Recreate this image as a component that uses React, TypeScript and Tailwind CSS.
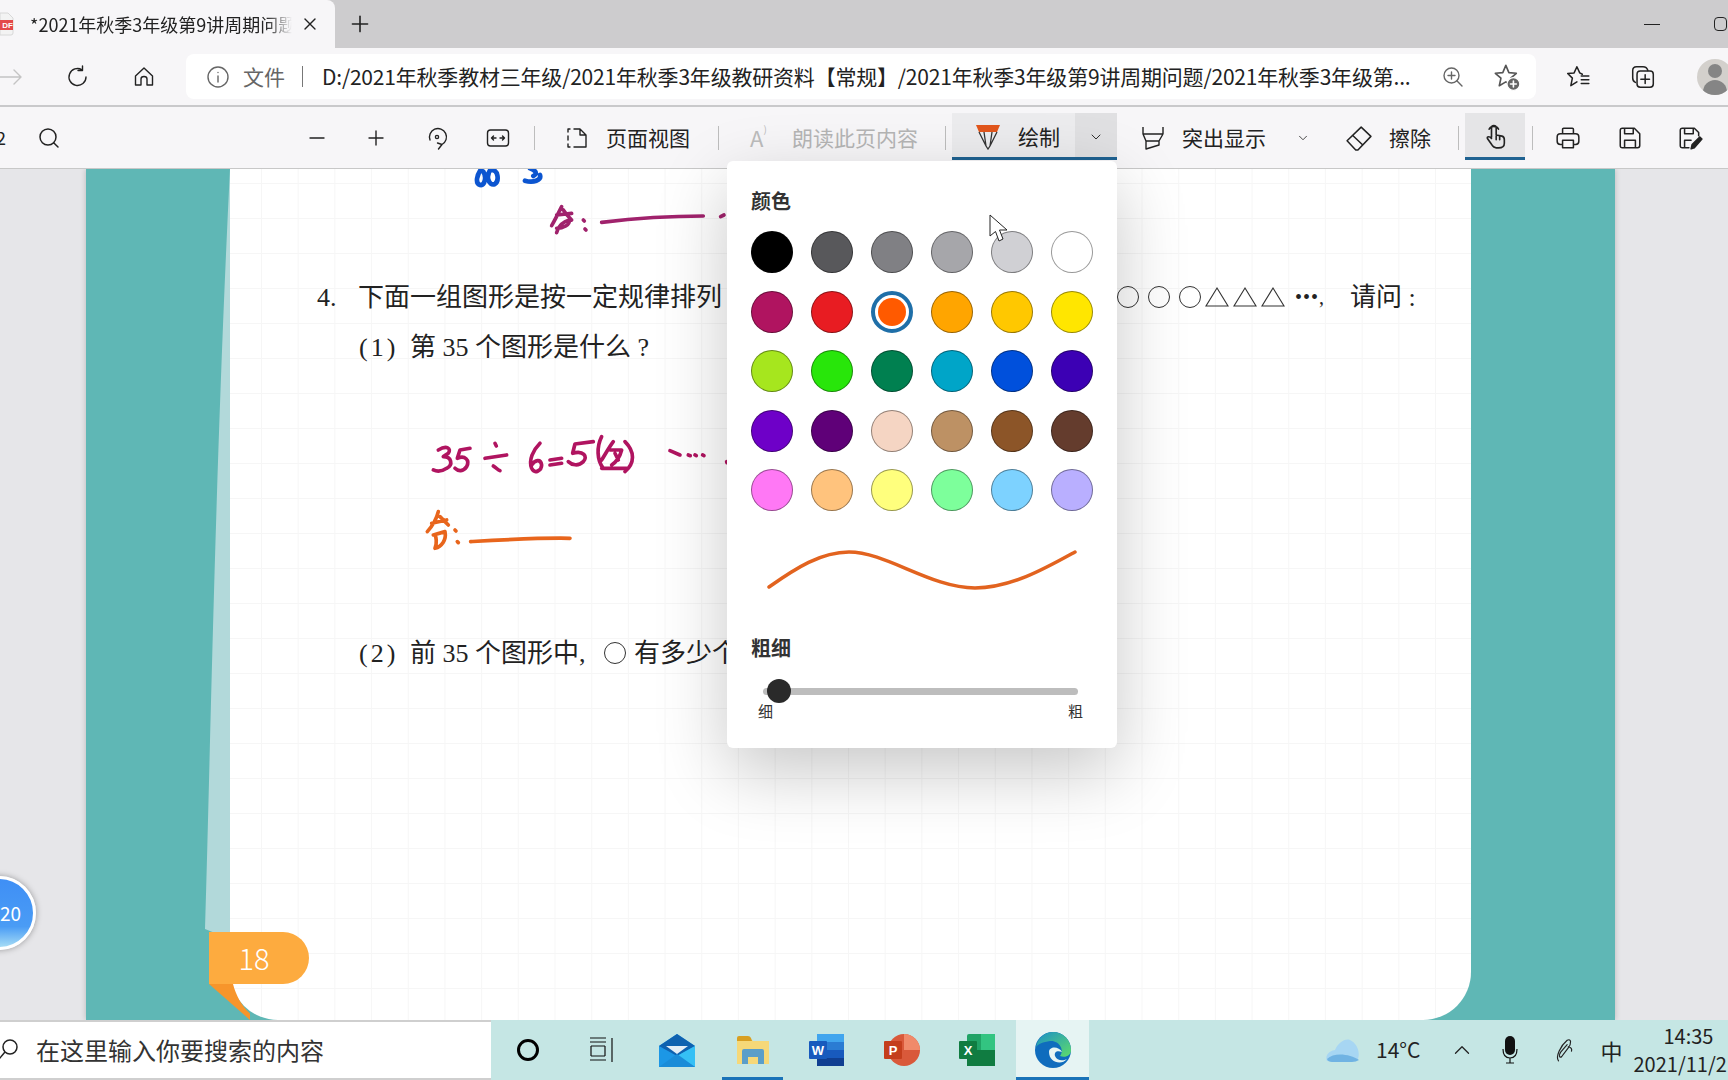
import { Minus, Plus, Search, X, ChevronDown, ChevronUp } from "lucide-react";

const SWATCHES = [
  "#000000", "#58585b", "#808084", "#a6a6aa", "#d0d0d4", "#ffffff",
  "#b01460", "#e81c22", "#ff5a00", "#ffa500", "#ffc800", "#ffe600",
  "#a6e61e", "#28e60a", "#008050", "#00a5c8", "#0050dc", "#3c00b4",
  "#6e00c8", "#5f0078", "#f5d5c3", "#bd9164", "#8c5528", "#643c2d",
  "#ff78f5", "#ffc37d", "#ffff7d", "#7dff9b", "#7dd2ff", "#b9afff",
];

function Icon({ children, size = 24, className = "" }: { children: React.ReactNode; size?: number; className?: string }) {
  return (
    <svg width={size} height={size} viewBox="0 0 24 24" fill="none" stroke="#222" strokeWidth="1.4" strokeLinecap="round" strokeLinejoin="round" className={`shrink-0 ${className}`}>
      {children}
    </svg>
  );
}

function Divider({ className = "" }: { className?: string }) {
  return <div className={`h-6 w-px shrink-0 bg-[#bdbdbd] ${className}`} />;
}

function Ring() {
  return <span className="inline-block h-[22px] w-[22px] shrink-0 rounded-full border border-[#333]" />;
}

function Triangle() {
  return (
    <svg width="24" height="22" viewBox="0 0 24 22" fill="none" stroke="#333" strokeWidth="1.1" className="shrink-0">
      <path d="M12 2 L23 20 H1 Z" />
    </svg>
  );
}

function TabStrip() {
  return (
    <div className="flex h-12 shrink-0 items-center bg-[#cdccce]">
      <div className="flex h-12 w-[335px] shrink-0 items-center rounded-tr-lg bg-[#f7f6f8]">
        <svg width="14" height="24" viewBox="0 0 14 24" className="shrink-0">
          <path d="M0 1 H8 L13 6 V21 Q13 23 11 23 H0 Z" fill="#f3f3f3" stroke="#d8d8d8" />
          <rect x="0" y="8" width="13" height="10" fill="#e34a4a" />
          <text x="13" y="16" textAnchor="end" fontSize="8" fontWeight="700" fill="#fff" fontFamily="Liberation Sans">DF</text>
        </svg>
        <div className="ml-[16px] w-[262px] overflow-hidden whitespace-nowrap text-[18px] text-[#222] [mask-image:linear-gradient(to_right,black_90%,transparent)]">
          *2021年秋季3年级第9讲周期问题
        </div>
        <X size={20} strokeWidth={1.6} color="#222" className="ml-[8px] shrink-0" />
      </div>
      <Plus size={26} strokeWidth={1.5} color="#222" className="ml-[12px] shrink-0" />
      <div className="ml-[1271px] h-px w-[16px] shrink-0 bg-[#222]" />
      <div className="ml-[54px] h-[14px] w-[13px] shrink-0 rounded-sm border border-[#222]" />
    </div>
  );
}

function AddressBar() {
  return (
    <div className="flex h-[59px] shrink-0 items-center border-b-2 border-[#c9c9cb] bg-[#f7f6f8]">
      <Icon><path d="M-4 12 H21 M14 5 L21 12 L14 19" stroke="#c4c4c4" /></Icon>
      <Icon className="ml-[42px]"><path d="M20 12 A8.5 8.5 0 1 1 16 4.8 M16.5 1 V5.5 H12" /></Icon>
      <Icon className="ml-[42px]"><path d="M3.5 11 L12 3 L20.5 11 V20 H15 V14 Q15 11.5 12 11.5 Q9 11.5 9 14 V20 H3.5 Z" /></Icon>
      <div className="ml-[30px] flex h-[45px] w-[1350px] shrink-0 items-center rounded-lg bg-white">
        <Icon size={24} className="ml-[20px]"><circle cx="12" cy="12" r="10" stroke="#666" /><path d="M12 11 V17 M12 7.4 V7.6" stroke="#666" /></Icon>
        <span className="ml-[13px] text-[21px] text-[#666]">文件</span>
        <div className="ml-[17px] h-[21px] w-px bg-[#777]" />
        <div className="ml-[19px] w-[1090px] overflow-hidden whitespace-nowrap text-[21px] tracking-[-0.2px] text-[#222]">
          D:/2021年秋季教材三年级/2021年秋季3年级教研资料【常规】/2021年秋季3年级第9讲周期问题/2021年秋季3年级第...
        </div>
        <Icon className="ml-[29px]"><circle cx="10.5" cy="10.5" r="7.5" stroke="#666" /><path d="M15.8 15.8 L21 21 M10.5 7 V14 M7 10.5 H14" stroke="#666" /></Icon>
        <Icon size={28} className="ml-[28px]">
          <path d="M11 2 L13.6 8.2 L20 8.8 L15.2 13 L16.6 19.5 L11 16.2 L5.4 19.5 L6.8 13 L2 8.8 L8.4 8.2 Z" stroke="#555" />
          <circle cx="17.5" cy="18" r="5.5" fill="#666" stroke="#fff" strokeWidth="1" />
          <path d="M17.5 15.5 V20.5 M15 18 H20" stroke="#fff" />
        </Icon>
      </div>
      <Icon size={26} className="ml-[29px]"><path d="M16 9.5 L13.6 8.2 L11 2.5 L8.4 8.2 L2.5 8.8 L6.8 13 L5.4 20 L11 16.5 M15 11 H22 M15 14.5 H22 M15 18 H22" /></Icon>
      <Icon size={26} className="ml-[39px]"><path d="M5 17 Q2.5 16 2.5 13 V6 Q2.5 2.5 6 2.5 H12 Q15.5 2.5 16.5 6" /><rect x="6.5" y="6.5" width="15" height="15" rx="3" /><path d="M14 10 V18 M10 14 H18" /></Icon>
      <div className="relative ml-[41px] h-[36px] w-[36px] shrink-0 overflow-hidden rounded-full bg-[#d3d0cc]">
        <div className="mx-auto mt-[5px] h-[14px] w-[14px] rounded-full bg-[#858585]" />
        <div className="mx-auto mt-[2px] h-[20px] w-[24px] rounded-t-full bg-[#858585]" />
      </div>
    </div>
  );
}

function PdfToolbar() {
  return (
    <div className="flex h-[62px] shrink-0 items-center overflow-hidden whitespace-nowrap border-b border-[#c8c8c8] bg-[#f7f6f8] text-[21px] text-[#222]">
      <div className="flex w-[6px] shrink-0 justify-end overflow-hidden text-[18px]">2</div>
      <Search size={24} strokeWidth={1.5} color="#222" className="ml-[31px] shrink-0" />
      <Minus size={24} strokeWidth={1.4} color="#222" className="ml-[244px] shrink-0" />
      <Plus size={24} strokeWidth={1.4} color="#222" className="ml-[35px] shrink-0" />
      <Icon className="ml-[37px]"><path d="M5 14 A8.5 8.5 0 1 1 17 18.5 M13.5 23 L17 18.5 L12.5 17" /><circle cx="12" cy="11" r="1.6" /></Icon>
      <Icon className="ml-[37px]"><rect x="1.5" y="4" width="21" height="16" rx="3" /><path d="M5.5 12 H10 M5.5 12 L7.5 10 M5.5 12 L7.5 14 M14 12 H18.5 M18.5 12 L16.5 10 M18.5 12 L16.5 14" /></Icon>
      <Divider className="ml-[24px]" />
      <Icon className="ml-[30px]"><path d="M9 3 H15 L21 9 V21 H9 M15 3 V9 H21 M5 3 H3 V6 M3 10 V14 M3 18 V21 H5" /></Icon>
      <span className="ml-[17px]">页面视图</span>
      <Divider className="ml-[28px]" />
      <span className="ml-[31px] flex w-6 shrink-0 text-[22px] text-[#bcbcbc]">A<span className="text-[10px]">)</span></span>
      <span className="ml-[18px] text-[#b5b5b5]">朗读此页内容</span>
      <Divider className="ml-[27px]" />
      <div className="ml-[6px] mt-[6px] flex h-[47px] w-[165px] shrink-0 self-start border-b-[3px] border-[#1f6291] bg-[#ececee]">
        <div className="flex w-[123px] items-center pt-[3px]">
          <svg width="24" height="26" viewBox="0 0 24 26" className="ml-[24px] shrink-0">
            <path d="M0 1 H24 L21 8 H3 Z" fill="#e2561c" />
            <path d="M3 8 L10 22 L12 25 L14 22 L21 8 M8 8 L10 22 M16 8 L14 22" fill="none" stroke="#333" strokeWidth="1.3" />
          </svg>
          <span className="ml-[18px]">绘制</span>
        </div>
        <div className="flex w-[42px] items-center justify-center bg-[#e0e0e2] pt-[3px]">
          <ChevronDown size={16} strokeWidth={1.4} color="#222" />
        </div>
      </div>
      <svg width="22" height="24" viewBox="0 0 22 24" fill="none" stroke="#222" strokeWidth="1.4" strokeLinejoin="round" className="ml-[25px] shrink-0">
        <path d="M1 1 V8 H21 V1 M1 8 L4 15 V23 L17 19 V15 L21 8 M4 15 H17" />
      </svg>
      <span className="ml-[18px]">突出显示</span>
      <ChevronDown size={14} strokeWidth={1.4} color="#222" className="ml-[30px] shrink-0" />
      <Icon size={26} className="ml-[36px]"><path d="M14 2 L23 10.5 L11 23 H9 L1 14.5 Z M6 9.5 L15.5 18.5" /></Icon>
      <span className="ml-[17px]">擦除</span>
      <Divider className="ml-[27px]" />
      <div className="ml-[6px] mt-[6px] flex h-[47px] w-[60px] shrink-0 items-center justify-center self-start border-b-[3px] border-[#1f6291] bg-[#e5e5e7]">
        <Icon size={28}><path d="M9 14 V6 Q9 4 11 4 Q13 4 13 6 V12 L18 13 Q20 13.5 20 16 V19 Q20 23 15 23 H13 Q11 23 9 20 L5.5 15 Q5 13.5 6.5 13.5 Q8 13.5 9 15 M7 7 A4.5 4.5 0 0 1 15 7 M13 13 V16 M16 13 V16" /></Icon>
      </div>
      <Divider className="ml-[7px]" />
      <Icon size={26} className="ml-[22px]"><path d="M7 8 V4 Q7 3 8 3 H16 Q17 3 17 4 V8 M7 18 H5 Q2 18 2 15 V11 Q2 8 5 8 H19 Q22 8 22 11 V15 Q22 18 19 18 H17 M7 14 H17 V21 H7 Z" /></Icon>
      <Icon size={26} className="ml-[36px]"><path d="M5 3 H16 L21 8 V19 Q21 21 19 21 H5 Q3 21 3 19 V5 Q3 3 5 3 Z M7 3 V8 H15 V3 M7 21 V14 H17 V21" /></Icon>
      <Icon size={26} className="ml-[34px]"><path d="M11 21 H5 Q3 21 3 19 V5 Q3 3 5 3 H16 L20 7 V10 M7 3 V8 H15 V3 M7 21 V14 H13" /><path d="M13 22 L14 18 L21 11 L23 13 L16 21 Z" fill="#222" /></Icon>
      <Divider className="ml-[25px]" />
    </div>
  );
}

function Ink() {
  return (
    <svg viewBox="0 169 1728 851" className="pointer-events-none absolute left-0 top-0 h-[851px] w-[1728px]" fill="none" strokeLinecap="round" strokeLinejoin="round">
      <g transform="translate(300 160) scale(0.3333)" strokeWidth="11">
        <g stroke="#0c55d0" strokeWidth="14">
          <path d="M545 25 C530 45 525 70 540 75 C555 78 560 50 550 35 M575 25 C555 45 565 80 585 72 C598 62 595 30 575 30" />
          <path d="M690 25 C705 30 715 40 700 48 M675 62 C700 70 725 60 720 45" />
        </g>
        <g stroke="#a0226c">
          <path d="M785 140 C775 160 765 180 755 197 M770 165 L815 160 M790 150 C800 165 810 175 815 180 M770 205 C790 205 810 195 808 180 C790 185 775 195 770 218 M850 180 l3 3 M855 207 l3 3" />
          <path d="M905 187 C980 178 1100 168 1210 168 M1262 170 l10 -5" />
        </g>
        <g stroke="#b01460">
          <path d="M415 870 C440 855 455 865 445 880 L430 890 C455 890 460 915 440 925 C425 935 410 935 400 930" />
          <path d="M510 865 L480 870 L472 895 C495 885 510 900 500 920 C490 935 475 935 465 925" />
          <path d="M555 895 L620 885 M585 850 l4 8 M580 918 C590 925 595 930 600 932" />
          <path d="M720 850 C700 870 685 900 695 925 C705 945 725 930 725 915 C722 895 705 900 695 915" />
          <path d="M750 900 L785 895 M750 915 L785 910" />
          <path d="M880 845 L825 852 L818 880 C850 870 865 890 850 905 C835 920 815 915 805 905" />
          <path d="M905 830 C890 860 890 900 910 925 M940 845 C925 865 915 885 905 900 M930 870 L965 870 C960 890 950 905 935 915 M945 880 L955 900 M905 925 L980 925 M975 845 C1005 875 1005 910 975 935" />
          <path d="M1110 872 L1140 885 M1165 885 l6 2 M1185 885 l4 2 M1208 885 l4 2 M1280 905 l1 3" />
        </g>
        <g stroke="#e8651c">
          <path d="M415 1055 C410 1075 400 1095 382 1115 M395 1090 L440 1080 M420 1070 L445 1095 M400 1125 L435 1115 C440 1140 425 1160 405 1165 C412 1150 408 1130 405 1125 M465 1110 l3 3 M472 1145 l3 3" />
          <path d="M512 1145 C600 1140 720 1133 810 1135" />
        </g>
      </g>
    </svg>
  );
}

function DocumentView() {
  return (
    <div className="relative h-[851px] shrink-0 overflow-hidden bg-[#e6e6e9]">
      <div className="ml-[86px] flex h-full w-[1529px] bg-[#5fb7b5] shadow-[0_0_6px_rgba(0,0,0,0.2)]">
        <div className="ml-[144px] h-full w-[1241px] rounded-b-[48px] bg-white bg-[linear-gradient(to_right,#f6f6f6_1px,transparent_1px),linear-gradient(to_bottom,#f6f6f6_1px,transparent_1px)] bg-[size:36.7px_35px] bg-[position:31px_14px] pt-[110px] font-['Liberation_Serif','Noto_Sans_CJK_SC',serif] text-[26px] text-[#222]">
          <div className="flex h-9 items-center whitespace-nowrap">
            <span className="ml-[87px] w-[41px]">4.</span>
            <span>下面一组图形是按一定规律排列</span>
            <div className="ml-[395px] flex items-center gap-[9px]"><Ring /><Ring /><Ring /></div>
            <div className="ml-[4px] flex items-center gap-[4px]"><Triangle /><Triangle /><Triangle /></div>
            <span className="ml-[10px] text-[20px] tracking-[1px]">•••,</span>
            <span className="ml-[25px]">请问 :</span>
          </div>
          <div className="mt-[14px] flex h-9 items-center whitespace-nowrap pl-[129px]">
            <span className="w-[51px] tracking-[3px]">(1)</span>
            <span className="whitespace-pre">第 35 个图形是什么 ?</span>
          </div>
          <div className="mt-[270px] flex h-9 items-center whitespace-nowrap pl-[129px]">
            <span className="w-[51px] tracking-[3px]">(2)</span>
            <span className="whitespace-pre">前 35 个图形中</span>
            <span className="w-[25px]">,</span>
            <Ring />
            <span className="ml-[8px]">有多少个</span>
          </div>
        </div>
      </div>
      <svg viewBox="0 0 60 851" className="absolute left-[190px] top-0 h-[851px] w-[60px]">
        <path d="M40 0 C25 300 20 600 15 760 L40 770 Z" fill="#b2d9da" />
        <path d="M19 815 L43 815 C47 830 56 845 70 851 L60 851 Z" fill="#f7952b" />
      </svg>
      <Ink />
      <div className="absolute left-[209px] top-[763px] flex h-[52px] w-[100px] items-center justify-center rounded-r-[26px] bg-[#fdab3f] pr-[10px] text-[29px] font-light text-white">
        18
      </div>
      <div className="absolute -left-[38px] top-[707px] flex h-[74px] w-[74px] items-center justify-end rounded-full border-[3px] border-white bg-[linear-gradient(to_bottom,#3f8ff5,#4a9cf5_70%,#a6dcf5)] pr-[12px] text-[19px] text-white shadow-[0_0_6px_rgba(0,0,0,0.35)]">
        20
      </div>
    </div>
  );
}

function DrawPopup() {
  return (
    <div className="absolute left-[727px] top-[161px] h-[587px] w-[390px] rounded-md bg-white px-6 pt-[28px] text-[#333] shadow-[0_24px_70px_rgba(0,0,0,0.22)]">
      <div className="text-[20px] font-bold leading-6">颜色</div>
      <div className="mt-[18px] grid grid-cols-[repeat(6,42px)] gap-x-[18px] gap-y-[17.5px]">
        {SWATCHES.map((c, i) =>
          i === 8 ? (
            <div key={i} className="flex h-[42px] w-[42px] items-center justify-center rounded-full border-[4px] border-[#1f6fa8] bg-white">
              <div className="h-[28px] w-[28px] rounded-full" style={{ background: c }} />
            </div>
          ) : (
            <div key={i} className="h-[42px] w-[42px] rounded-full border border-black/40" style={{ background: c }} />
          ),
        )}
      </div>
      <svg width="320" height="46" viewBox="0 0 320 46" fill="none" className="ml-[15px] mt-[35px] block">
        <path d="M3 41 C30 22 55 6 83 6 C120 6 165 42 209 42 C245 42 280 22 309 6" stroke="#e2631f" strokeWidth="3.5" strokeLinecap="round" />
      </svg>
      <div className="mt-[44px] text-[20px] font-bold leading-6">粗细</div>
      <div className="relative ml-[12px] mt-[28px] h-[7px] w-[315px] rounded-full bg-[#bdbdbd]">
        <div className="absolute -top-[9px] left-[4px] h-6 w-6 rounded-full bg-[#2a2a2a]" />
      </div>
      <div className="mt-[6px] flex w-[332px] justify-between pl-[7px] text-[15px] leading-5">
        <span>细</span>
        <span>粗</span>
      </div>
    </div>
  );
}

function Cursor() {
  return (
    <svg width="22" height="30" viewBox="0 0 22 30" className="absolute left-[989px] top-[214px]">
      <path d="M1 1 V22 L6.5 17.5 L10 27 L14 25 L10.5 16 H18 Z" fill="#fff" stroke="#222" strokeWidth="1" />
    </svg>
  );
}

function Taskbar() {
  return (
    <div className="flex h-[60px] shrink-0 items-center overflow-hidden whitespace-nowrap bg-[#c5e6e4] text-[#222]">
      <div className="flex h-[60px] w-[491px] shrink-0 items-center border-y-2 border-[#cfcfcf] bg-white">
        <svg width="20" height="24" viewBox="0 0 20 24" fill="none" stroke="#222" strokeWidth="1.5" className="-ml-[1px] shrink-0">
          <circle cx="11" cy="9" r="7" />
          <path d="M6 14 L0 21" />
        </svg>
        <span className="ml-[17px] text-[24px] leading-none text-[#333]">在这里输入你要搜索的内容</span>
      </div>
      <div className="ml-[26px] h-[22px] w-[22px] shrink-0 rounded-full border-[3px] border-black" />
      <svg width="26" height="26" viewBox="0 0 26 26" fill="none" stroke="#111" strokeWidth="1.2" className="ml-[49px] shrink-0">
        <path d="M2 1 H18 M2 5 H18 M3 9 V19 M17 9 V19 M3 9 H17 M3 19 H17 M2 23 H18 M24 1 V25" />
      </svg>
      <svg width="36" height="33" viewBox="0 0 36 33" className="ml-[45px] shrink-0">
        <path d="M0 12 L18 0 L36 12 V33 H0 Z" fill="#1c97e6" />
        <path d="M0 12 L18 0 L36 12 L18 22 Z" fill="#0f62b0" />
        <path d="M7 12 H29 L18 20 Z" fill="#e4eef7" />
        <path d="M18 22 L36 12 V33 Z" fill="#35c0f5" />
        <path d="M0 33 L18 20 L36 33 Z" fill="#1a8cd8" />
      </svg>
      <div className="relative ml-[27px] flex h-[60px] w-[61px] shrink-0 items-center justify-center">
        <svg width="32" height="28" viewBox="0 0 32 28">
          <path d="M0 2 H13 L16 5 H32 V28 H0 Z" fill="#f6d878" />
          <path d="M0 2 Q0 0 2 0 H11 Q13 0 14 2 L15 5 H0 Z" fill="#d89f22" />
          <path d="M5 15 Q5 13 7 13 H25 Q27 13 27 15 V28 H21 V21 H11 V28 H5 Z" fill="#5b9ec9" />
        </svg>
        <div className="absolute bottom-0 left-0 h-[3px] w-full bg-[#1a73b8]" />
      </div>
      <svg width="35" height="32" viewBox="0 0 35 32" className="ml-[26px] shrink-0">
        <rect x="8" y="0" width="27" height="32" rx="2" fill="#2b7cd3" />
        <rect x="8" y="0" width="27" height="8" fill="#41a5ee" />
        <rect x="8" y="16" width="27" height="8" fill="#185abd" />
        <rect x="8" y="24" width="27" height="8" fill="#103f91" />
        <rect x="0" y="7" width="18" height="18" rx="1" fill="#185abd" />
        <text x="9" y="21" textAnchor="middle" fontSize="13" fontWeight="700" fill="#fff" fontFamily="Liberation Sans">W</text>
      </svg>
      <svg width="36" height="32" viewBox="0 0 36 32" className="ml-[40px] shrink-0">
        <circle cx="20" cy="16" r="16" fill="#d9593a" />
        <path d="M20 0 A16 16 0 0 1 36 16 H20 Z" fill="#f08a6a" />
        <rect x="0" y="7" width="18" height="18" rx="1" fill="#c43e1c" />
        <text x="9" y="21" textAnchor="middle" fontSize="13" fontWeight="700" fill="#fff" fontFamily="Liberation Sans">P</text>
      </svg>
      <svg width="36" height="32" viewBox="0 0 36 32" className="ml-[39px] shrink-0">
        <rect x="8" y="0" width="28" height="32" rx="2" fill="#21a366" />
        <rect x="22" y="0" width="14" height="16" fill="#33c481" />
        <rect x="8" y="16" width="28" height="16" fill="#107c41" />
        <rect x="0" y="7" width="18" height="18" rx="1" fill="#107c41" />
        <text x="9" y="21" textAnchor="middle" fontSize="13" fontWeight="700" fill="#fff" fontFamily="Liberation Sans">X</text>
      </svg>
      <div className="relative ml-[21px] flex h-[60px] w-[73px] shrink-0 items-center justify-center bg-[#e6f4f3]">
        <svg width="36" height="36" viewBox="0 0 36 36">
          <defs>
            <linearGradient id="edgeTop" x1="0" y1="0" x2="1" y2="1">
              <stop offset="0" stopColor="#1a8fc8" />
              <stop offset="1" stopColor="#5fdc6a" />
            </linearGradient>
          </defs>
          <circle cx="18" cy="18" r="18" fill="#0f6cbd" />
          <path d="M1 15 C3 4 12 0 18 0 C28 0 36 8 36 18 C36 24 30 26 25 24 C30 18 24 8 15 9 C8 10 3 12 1 15 Z" fill="url(#edgeTop)" />
          <path d="M14 20 C14 14 24 14 27 20 C22 18 19 20 20 24 C22 29 28 29 32 27 C26 34 14 30 14 20 Z" fill="#e6f4f3" />
        </svg>
        <div className="absolute bottom-0 left-0 h-[3px] w-full bg-[#1a73b8]" />
      </div>
      <svg width="34" height="24" viewBox="0 0 34 24" className="ml-[237px] shrink-0">
        <path d="M1 23 C-2 16 6 12 9 12 C12 5 19 0 24 2 C32 6 35 16 31 23 Z" fill="#a7d6f3" />
        <path d="M1 21 C8 14 24 16 33 22 Q30 24 26 24 H6 Q2 24 1 21 Z" fill="#70b3e3" />
      </svg>
      <span className="ml-[16px] text-[21px]">14°C</span>
      <ChevronUp size={26} strokeWidth={1.2} color="#222" className="ml-[29px] shrink-0" />
      <svg width="16" height="30" viewBox="0 0 16 30" className="ml-[27px] shrink-0">
        <rect x="3" y="1" width="10" height="19" rx="5" fill="#111" />
        <path d="M1 14 Q1 23 8 23 Q15 23 15 14 M8 23 V28 M4 28 H12" fill="none" stroke="#111" strokeWidth="1.2" />
      </svg>
      <Icon size={26} className="ml-[34px]"><path d="M6 22 C3 18 8 8 14 3 C18 1 18 6 15 10 L9 18 C7 20 6 17 8 14 L14 7 M15 9 Q19 10 18 13" strokeWidth="1.1" /></Icon>
      <span className="ml-[22px] text-[22px]">中</span>
      <div className="ml-[11px] flex w-[104px] shrink-0 flex-col items-start text-[20px] leading-[28px]">
        <span className="ml-[30px]">14:35</span>
        <span>2021/11/2</span>
      </div>
    </div>
  );
}

export default function App() {
  return (
    <div className="relative flex h-[1080px] w-[1728px] flex-col overflow-hidden font-['Noto_Sans_CJK_SC','Liberation_Sans',sans-serif]">
      <TabStrip />
      <AddressBar />
      <PdfToolbar />
      <DocumentView />
      <Taskbar />
      <DrawPopup />
      <Cursor />
    </div>
  );
}
